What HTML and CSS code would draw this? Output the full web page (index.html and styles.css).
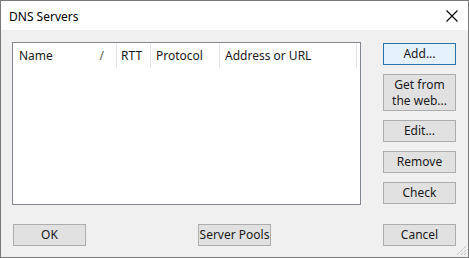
FILE: index.html
```html
<!DOCTYPE html>
<html>
<head>
<meta charset="utf-8">
<link rel="stylesheet" href="styles.css">
</head>
<body>
<div class="window">
  <div class="titlebar">
    <span class="title">DNS Servers</span>
    <svg class="close" width="12" height="12" viewBox="0 0 12 12"><path d="M0.5 0.5 L11.5 11.5 M11.5 0.5 L0.5 11.5" stroke="#000" stroke-width="1.1" fill="none"/></svg>
  </div>
  <div class="client">
    <div class="toprow">
      <div class="list">
        <div class="header">
          <div class="col c-name"><span>Name</span><span class="sort">/</span></div>
          <div class="col c-rtt">RTT</div>
          <div class="col c-proto">Protocol</div>
          <div class="col c-addr">Address or URL</div>
        </div>
      </div>
      <div class="side">
        <button class="btn default">Add...</button>
        <button class="btn tall"><span class="ln">Get from</span><span class="ln">the web...</span></button>
        <button class="btn">Edit...</button>
        <button class="btn">Remove</button>
        <button class="btn">Check</button>
      </div>
    </div>
    <div class="bottomrow">
      <button class="btn">OK</button>
      <button class="btn">Server Pools</button>
      <button class="btn">Cancel</button>
    </div>
  </div>
  <svg class="grip" width="12" height="12" viewBox="0 0 12 12">
    <path d="M11 2 L2 11 M11 6 L6 11 M11 9 L9 11" stroke="#a8a8a8" stroke-width="1" stroke-dasharray="1 1" fill="none"/>
  </svg>
</div>
</body>
</html>
```
FILE: styles.css
```css
* { box-sizing: border-box; }
html, body { margin: 0; padding: 0; background: #f0f0f0; }
body { font-family: "Noto Sans", "Open Sans", sans-serif; font-size: 12px; color: #000; }
.window {
  position: relative;
  width: 469px;
  height: 258px;
  border: 1px solid #7a7a7a;
  background: #f0f0f0;
  display: flex;
  flex-direction: column;
}
.titlebar {
  height: 29px;
  background: #fff;
  display: flex;
  align-items: center;
  padding-left: 8px;
  padding-right: 10px;
  flex-shrink: 0;
}
.title { font-size: 12px; color: #000; padding-top: 1px; }
.close { margin-left: auto; margin-top: 1px; }
.client {
  flex: 1;
  padding: 12px 12px 0 11px;
  display: flex;
  flex-direction: column;
}
.toprow { display: flex; gap: 22px; height: 163px; }
.list {
  width: 349px;
  height: 163px;
  background: #fff;
  border: 1px solid #828790;
}
.header { display: flex; height: 25px; }
.col {
  display: flex;
  align-items: center;
  border-right: 1px solid #e5e5e5;
  color: #1a1a1a;
  padding-bottom: 1px;
}
.c-name { width: 104px; padding-left: 6px; padding-right: 12px; }
.c-name .sort { margin-left: auto; color: #555; }
.c-rtt { width: 34px; padding-left: 4px; }
.c-proto { width: 69px; padding-left: 5px; }
.c-addr { width: 137px; padding-left: 5px; }
.side {
  display: flex;
  flex-direction: column;
  gap: 9px;
  padding-top: 1px;
  width: 73px;
}
.btn {
  font-family: "Noto Sans", "Open Sans", sans-serif;
  font-size: 12px;
  color: #1a1a1a;
  background: #e1e1e1;
  border: 1px solid #adadad;
  height: 22px;
  width: 73px;
  padding: 0;
  line-height: 16px;
  margin: 0;
}
.btn.default { background: #e5f1fb; border-color: #2a74a8; }
.btn.tall {
  height: 37px;
  display: flex;
  flex-direction: column;
  align-items: center;
  justify-content: center;
}
.btn.tall .ln { display: block; line-height: 16px; height: 16px; }
.bottomrow {
  margin-top: 19px;
  padding-left: 1px;
  display: flex;
  justify-content: space-between;
}
.grip { position: absolute; right: 1px; bottom: 1px; }
```
